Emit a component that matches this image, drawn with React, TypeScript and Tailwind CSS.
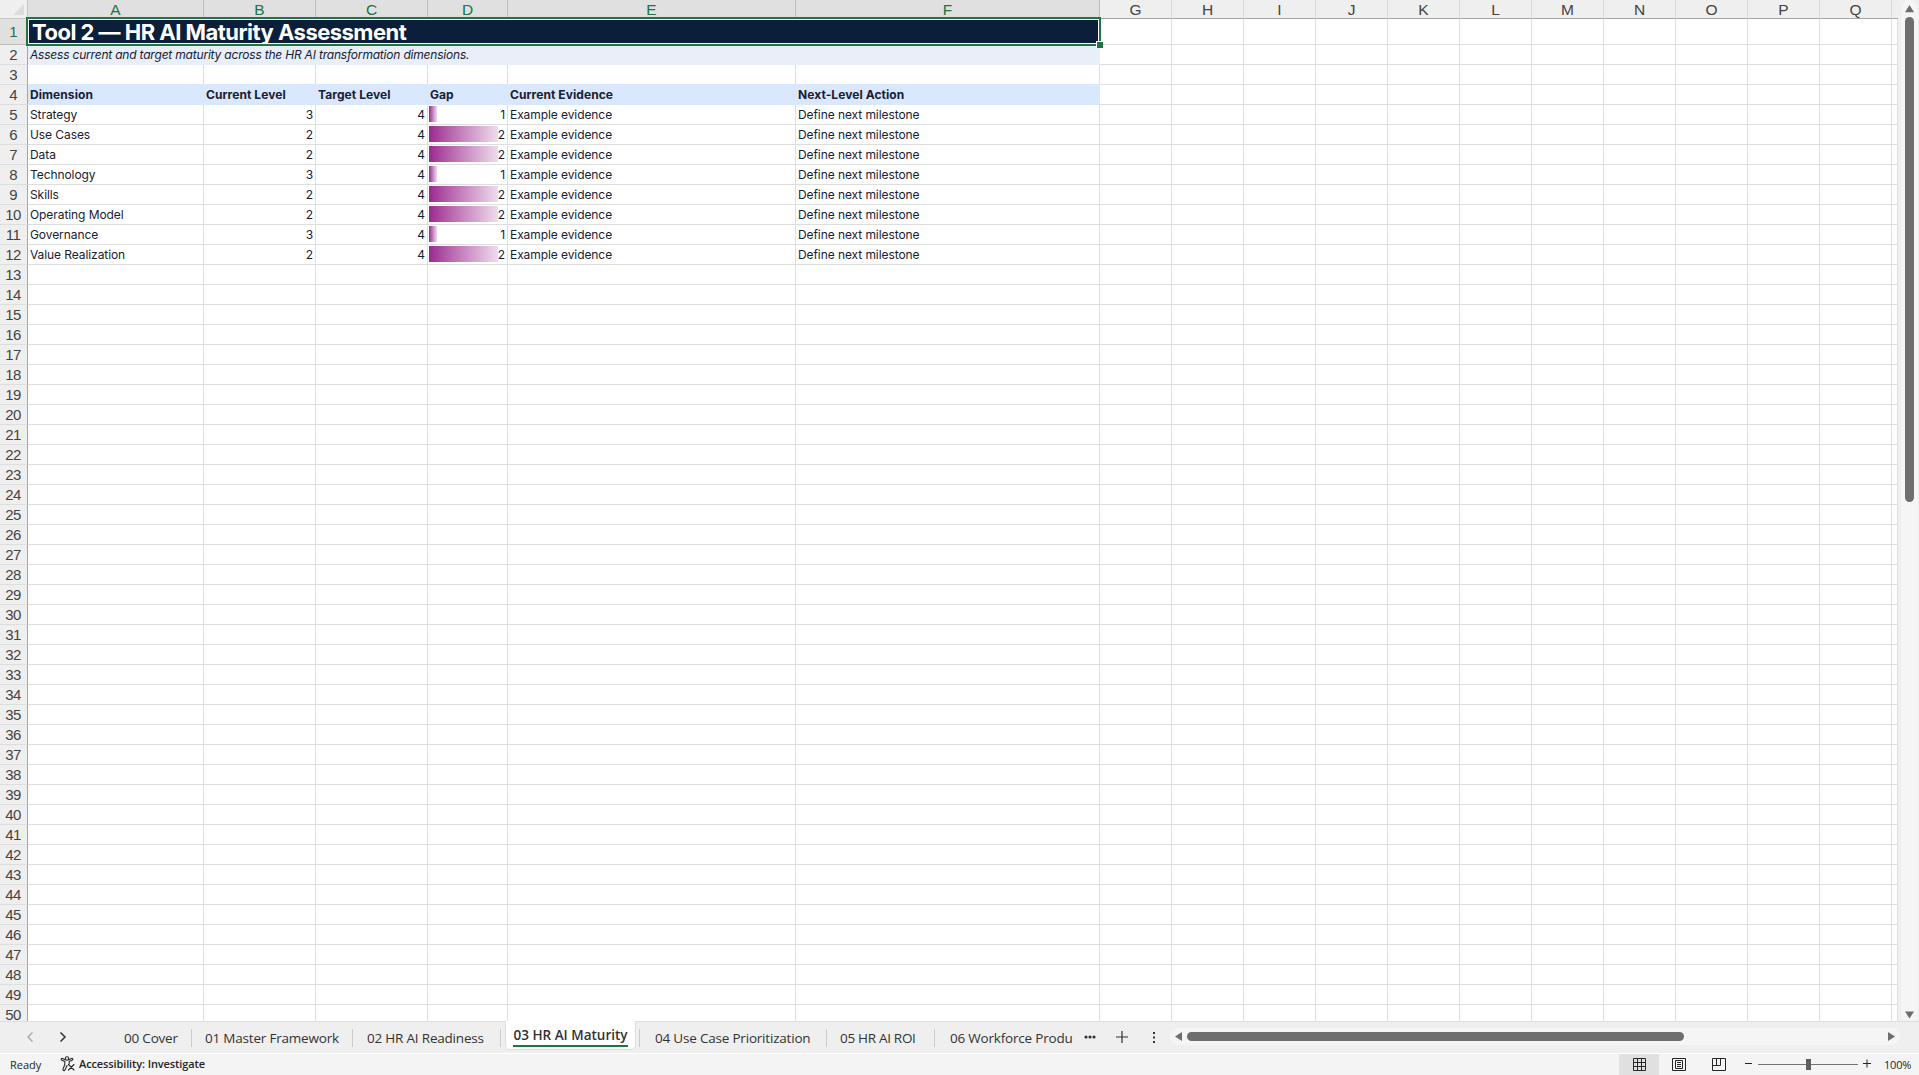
import React from 'react';

const columns: { name: string; width: string; selected?: boolean }[] = [
  { name: 'A', width: 'w-[176px]', selected: true },
  { name: 'B', width: 'w-[112px]', selected: true },
  { name: 'C', width: 'w-[112px]', selected: true },
  { name: 'D', width: 'w-[80px]', selected: true },
  { name: 'E', width: 'w-[288px]', selected: true },
  { name: 'F', width: 'w-[304px]', selected: true },
  ...'GHIJKLMNOPQ'.split('').map((name) => ({ name, width: 'w-[72px]' })),
];
const dataColumns = columns.slice(0, 6);
const blankColumns = columns.slice(6);

const headings = ['Dimension', 'Current Level', 'Target Level', 'Gap', 'Current Evidence', 'Next-Level Action'];

const dimensions: [string, number, number][] = [
  ['Strategy', 3, 4],
  ['Use Cases', 2, 4],
  ['Data', 2, 4],
  ['Technology', 3, 4],
  ['Skills', 2, 4],
  ['Operating Model', 2, 4],
  ['Governance', 3, 4],
  ['Value Realization', 2, 4],
];

const line = 'border-[#dedede]';

function RowNumber({ n }: { n: number }) {
  const selected = n === 1;
  return (
    <div
      className={`flex w-7 shrink-0 items-center justify-center border-r border-b pr-px text-[15px] leading-none tracking-[-0.6px] ${
        selected
          ? 'border-r-[#217346] border-b-[#bdbdbd] bg-[#e0e0e0] text-[#217346]'
          : 'border-r-[#a6a6a6] border-b-[#dedede] bg-[#efefef] text-[#444444]'
      }`}
    >
      {n}
    </div>
  );
}

function BlankCells({ cols }: { cols: typeof columns }) {
  return (
    <>
      {cols.map((c) => (
        <div key={c.name} className={`${c.width} shrink-0 border-r border-b ${line}`} />
      ))}
    </>
  );
}

function Row({ n, children }: { n: number; children?: React.ReactNode }) {
  return (
    <div className={`flex shrink-0 ${n === 1 ? 'h-[26px]' : 'h-5'}`}>
      <RowNumber n={n} />
      {children ?? <BlankCells cols={dataColumns} />}
      <BlankCells cols={blankColumns} />
      <div className={`w-1.5 shrink-0 border-r border-b ${line}`} />
    </div>
  );
}

function DataRow({ n, item }: { n: number; item: [string, number, number] }) {
  const gap = item[2] - item[1];
  const values = [item[0], item[1], item[2], gap, 'Example evidence', 'Define next milestone'];
  return (
    <Row n={n}>
      {values.map((v, i) => (
        <div
          key={i}
          className={`relative flex ${dataColumns[i].width} shrink-0 items-end border-r border-b ${line} pr-[2px] pl-[2px] leading-[18px] ${
            typeof v === 'number' ? 'justify-end' : ''
          }`}
        >
          {i === 3 && (
            <div
              className={`absolute top-px left-px h-4 bg-linear-to-r from-[#9b2691] to-[#eedcee] ${gap > 1 ? 'w-[69px]' : 'w-2'}`}
            />
          )}
          <span className="relative">{v}</span>
        </div>
      ))}
    </Row>
  );
}

function Sheet() {
  return (
    <div className="flex h-[1021px] w-[1898px] flex-col overflow-hidden bg-white font-['Liberation_Sans',sans-serif]">
      <div className="flex h-[19px] shrink-0 bg-[#efefef] text-[15.5px] leading-none">
        <div className="flex w-7 shrink-0 items-end justify-end border-r border-b border-[#c6c6c6] pr-[3px] pb-[3px]">
          <div className="h-[11px] w-[11px] bg-[#dcdcdc] [clip-path:polygon(100%_0,100%_100%,0_100%)]" />
        </div>
        {columns.map((c) => (
          <div
            key={c.name}
            className={`flex ${c.width} shrink-0 items-center justify-center border-r border-b border-b-[#a6a6a6] pt-[2px] ${
              c.selected ? 'border-r-[#bdbdbd] bg-[#e0e0e0] text-[#217346]' : 'border-r-[#dadada] text-[#444444]'
            }`}
          >
            {c.name}
          </div>
        ))}
        <div className="w-1.5 shrink-0 border-b border-[#a6a6a6]" />
      </div>
      <div className="flex flex-col font-['Inter',sans-serif] text-[12px] tracking-[-0.08px] text-[#172033] [&>div>div:first-child]:font-['Liberation_Sans']">
        <Row n={1}>
          <div className="relative flex w-[1072px] shrink-0 items-center bg-[#0b1f3a] pl-[4px] text-[22px] leading-none font-bold tracking-[-0.52px] text-white">
            <span>Tool 2 — HR AI Maturity Assessment</span>
            <div className="absolute -top-[2px] -right-px -bottom-px -left-[2px] z-20 border-2 border-[#217346]">
              <div className="h-full border border-white" />
            </div>
            <div className="absolute -right-[3px] -bottom-[3px] z-30 h-[7px] w-[7px] border-t border-l border-white bg-[#217346]" />
          </div>
        </Row>
        <Row n={2}>
          <div className="flex w-[1072px] shrink-0 items-end bg-[#e8eff9] pb-px pl-[2px] leading-[18px] tracking-[-0.2px] italic">
            Assess current and target maturity across the HR AI transformation dimensions.
          </div>
        </Row>
        <Row n={3} />
        <Row n={4}>
          <div className="relative z-10 flex w-[1072px] shrink-0 items-end bg-[#d9e7ff] pb-px leading-[18px] font-bold tracking-[0.07px] shadow-[0_-1px_0_#d9e7ff]">
            {headings.map((h, i) => (
              <div key={h} className={`${dataColumns[i].width} shrink-0 pl-[2px]`}>
                {h}
              </div>
            ))}
          </div>
        </Row>
        {dimensions.map((d, i) => (
          <DataRow key={d[0]} n={i + 5} item={d} />
        ))}
        {Array.from({ length: 38 }, (_, i) => (
          <Row key={i} n={i + 13} />
        ))}
      </div>
    </div>
  );
}

function VerticalScroll() {
  return (
    <div className="flex h-[1024px] w-[21px] justify-center bg-[#efefef] pl-px">
      <div className="flex w-[17px] flex-col items-center rounded-full bg-[#f5f5f5] pt-[5px] pb-[5px]">
        <svg width="9" height="8" className="shrink-0"><path d="M4.5 0 9 7.2H0Z" fill="#6e6e6e" /></svg>
        <div className="mt-1 h-[485px] w-[9px] rounded-full bg-[#6e6e6e]" />
        <svg width="9" height="8" className="mt-auto shrink-0"><path d="M0 .5h9L4.5 7.5Z" fill="#6e6e6e" /></svg>
      </div>
    </div>
  );
}

const Divider = () => <div className="mt-[7px] h-[18px] w-px shrink-0 bg-[#cccccc]" />;

function Tab({ label, className }: { label: string; className: string }) {
  return <div className={`shrink-0 overflow-hidden pt-[6px] leading-5 whitespace-nowrap ${className}`}>{label}</div>;
}

function TabBar() {
  return (
    <div className="flex h-8 w-full border-t border-[#dedede] bg-[#efefef] text-[13.5px] tracking-[-0.2px] text-[#333333]">
      <div className="flex w-[124px] shrink-0 gap-[25px] pt-[9px] pl-[26px]">
        <svg width="8" height="12" fill="none" stroke="#a3a3a3" strokeWidth="1.3"><path d="M6.5 1.5 2 6l4.500 4.500" /></svg>
        <svg width="8" height="12" fill="none" stroke="#333" strokeWidth="1.5"><path d="M1.500 1.500 6 6 1.500 10.500" /></svg>
      </div>
      <Tab label="00 Cover" className="w-[67px]" />
      <Divider />
      <Tab label="01 Master Framework" className="w-[160px] pl-[13px]" />
      <Divider />
      <Tab label="02 HR AI Readiness" className="w-[147px] pl-[14px]" />
      <Divider />
      <div className="-mt-px ml-[4px] flex h-[29px] w-[131px] shrink-0 justify-center rounded-b-[5px] border border-t-0 border-[#dedede] bg-white pt-[5px]">
        <span className="h-[21px] border-b-2 border-[#107c41] leading-[19px] font-semibold tracking-normal whitespace-nowrap">
          03 HR AI Maturity
        </span>
      </div>
      <div className="w-[3px] shrink-0" />
      <Divider />
      <Tab label="04 Use Case Prioritization" className="w-[186px] pl-[15px]" />
      <Divider />
      <Tab label="05 HR AI ROI" className="w-[107px] pl-[13px] tracking-[-0.3px]" />
      <Divider />
      <Tab label="06 Workforce Produ" className="w-[149px] pl-[15px]" />
      <svg width="12" height="4" className="mt-[13px] shrink-0" fill="#333"><circle cx="2" cy="2" r="1.6" /><circle cx="6" cy="2" r="1.6" /><circle cx="10" cy="2" r="1.6" /></svg>
      <svg width="12" height="12" className="mt-[9px] ml-[20px] shrink-0" stroke="#333" strokeWidth="1.200"><path d="M0 6h12M6 0v12" /></svg>
      <svg width="4" height="12" className="mt-[10px] ml-[24px] shrink-0" fill="#333"><rect x="1" y="0" width="2" height="2" /><rect x="1" y="4.500" width="2" height="2" /><rect x="1" y="9" width="2" height="2" /></svg>
      <div className="mt-[6px] ml-[14px] flex h-[17px] w-[730px] shrink-0 items-center rounded-full bg-[#f5f5f5] pl-[5px] pr-[5px]">
        <svg width="7" height="9"><path d="M7 0v9L0 4.500Z" fill="#6e6e6e" /></svg>
        <div className="ml-[5px] h-[9px] w-[497px] rounded-full bg-[#6e6e6e]" />
        <svg width="7" height="9" className="ml-auto"><path d="M0 0v9L7 4.500Z" fill="#6e6e6e" /></svg>
      </div>
    </div>
  );
}

function StatusBar() {
  return (
    <div className="flex h-[22px] w-full items-stretch border-t border-white bg-[#f4f4f4] text-[11px] leading-[21px] text-[#262626]">
      <span className="w-[60px] pl-[10px]">Ready</span>
      <svg width="16" height="16" viewBox="0 0 16 16" className="mt-[2px] shrink-0" fill="none" stroke="#262626" strokeWidth="1.100" strokeLinecap="round" strokeLinejoin="round">
        <circle cx="7" cy="2.500" r="1.700" />
        <path d="M5.300 3.700 2.500 2.400C1.200 1.900.6 3.700 1.900 4.300L4.800 5.600V8.500L3 13.100c-.5 1.400 1.300 2 1.900.8L7 9.500M8.700 3.700l2.800-1.300c1.300-.5 1.900 1.300.6 1.900L9.200 5.600v2" />
        <path d="m8.500 8.500 5.500 5.500M14 8.500 8.500 14" />
      </svg>
      <span className="ml-[3px] -mt-px font-semibold tracking-[-0.12px]">Accessibility: Investigate</span>
      <div className="ml-auto flex w-[40px] shrink-0 items-center justify-center bg-[#e0e0e0]">
        <svg width="13" height="13" fill="none" stroke="#262626"><path d="M.5.5h12v12H.5ZM4.500.5v12M8.500.5v12M.5 4.500h12M.5 8.500h12" /></svg>
      </div>
      <div className="flex w-[40px] shrink-0 items-center justify-center">
        <svg width="14" height="13" fill="none" stroke="#262626"><path d="M.5.5h13v12H.5ZM3.500 2.500h7v8h-7ZM5 4.500h4M5 6.500h4M5 8.500h4" /></svg>
      </div>
      <div className="flex w-[40px] shrink-0 items-center justify-center">
        <svg width="14" height="13" fill="none" stroke="#262626"><path d="M.5.5h13v12H.5ZM.5 7.500h8v-7M4.500.5v7" /></svg>
      </div>
      <svg width="128" height="21" className="ml-[5px] shrink-0" stroke="#262626">
        <path d="M1 9.500h7M119 9.500h8M123 5.500v8" />
        <path d="M14 10.500h100" stroke="#737373" />
        <rect x="62" y="5" width="5" height="11" fill="#5e5e5e" stroke="none" />
      </svg>
      <span className="w-[47px] shrink-0 pl-[12px] text-[11px] tracking-[-0.2px]">100%</span>
    </div>
  );
}

export default function App() {
  return (
    <div className="flex h-[1075px] w-[1919px] flex-col overflow-hidden bg-[#efefef] font-['Open_Sans',sans-serif]">
      <div className="flex h-[1021px] shrink-0 items-start">
        <Sheet />
        <VerticalScroll />
      </div>
      <TabBar />
      <StatusBar />
    </div>
  );
}
